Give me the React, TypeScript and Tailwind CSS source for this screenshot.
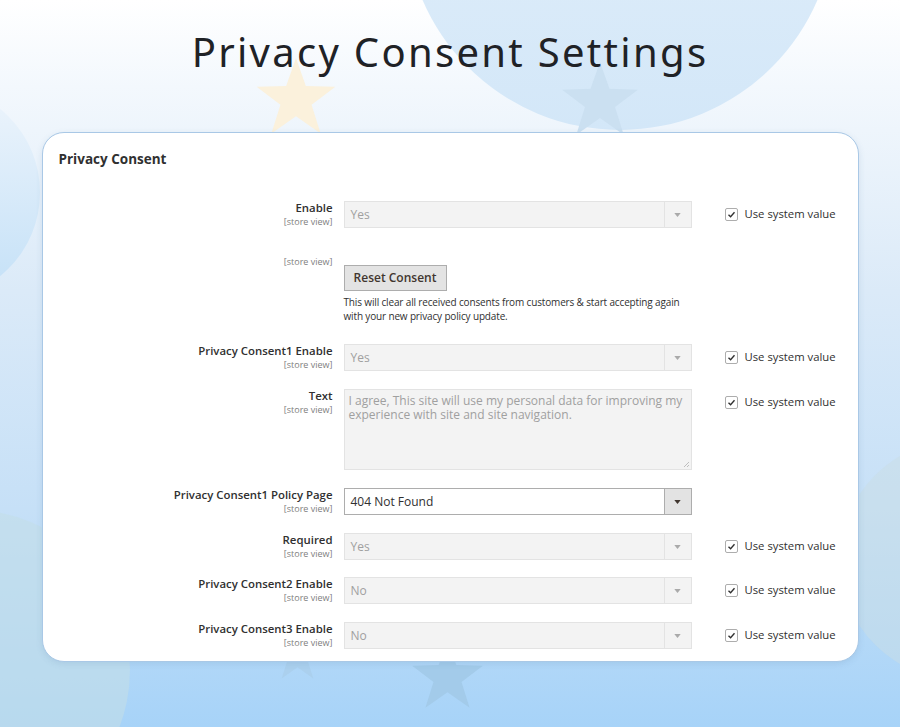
// Privacy consent settings panel over a soft blue backdrop

const font = { fontFamily: '"Open Sans", "Noto Sans", sans-serif' };

function Star({ className, fill }: { className: string; fill: string }) {
  return (
    <svg viewBox="0 0 100 95" className={className}>
      <path d="M50 0 L62 34 L98 35 L69 57 L80 92 L50 71 L20 92 L31 57 L2 35 L38 34 Z" fill={fill} />
    </svg>
  );
}

function Label({ title, scope = '[store view]' }: { title?: string; scope?: string }) {
  return (
    <div className="w-[290px] shrink-0 text-right leading-none">
      {title && <div className="text-[11.4px] font-semibold text-[#303030] leading-[14px]">{title}</div>}
      <div className={title ? 'text-[9px] text-[#808080] leading-[13px]' : 'text-[9px] text-[#808080] leading-[11px]'}>{scope}</div>
    </div>
  );
}

function SystemValue() {
  return (
    <div className="ml-[33px] flex h-[27px] items-center gap-[7px]">
      <span className="flex h-[13px] w-[13px] items-center justify-center rounded-[2px] border border-[#adadad] bg-white">
        <svg viewBox="0 0 12 12" className="h-[9px] w-[9px]">
          <path d="M2 6.2 L4.8 9 L10 3" fill="none" stroke="#303030" strokeWidth="1.8" />
        </svg>
      </span>
      <span className="text-[11.3px] text-[#303030]">Use system value</span>
    </div>
  );
}

function Select({ value, enabled = false }: { value: string; enabled?: boolean }) {
  return (
    <div
      className={
        enabled
          ? 'flex h-[27px] w-[348px] border border-[#adadad] bg-white'
          : 'flex h-[27px] w-[348px] border border-[#e3e3e3] bg-[#f3f3f3]'
      }
    >
      <div className={enabled ? 'flex-1 pl-[6px] text-[12px] leading-[25px] text-[#303030]' : 'flex-1 pl-[6px] text-[12px] leading-[25px] text-[#a0a0a0]'}>
        {value}
      </div>
      <div
        className={
          enabled
            ? 'flex w-[27px] items-center justify-center border-l border-[#adadad] bg-[#e3e3e3]'
            : 'flex w-[27px] items-center justify-center border-l border-[#e3e3e3]'
        }
      >
        <svg viewBox="0 0 8 5" className="h-[4px] w-[7px]">
          <path d="M0 0 L8 0 L4 5 Z" fill={enabled ? '#41362f' : '#aaaaaa'} />
        </svg>
      </div>
    </div>
  );
}

function SelectRow({ title, value, system = true, enabled = false, className = '' }: { title: string; value: string; system?: boolean; enabled?: boolean; className?: string }) {
  return (
    <div className={`flex items-start ${className}`}>
      <Label title={title} />
      <div className="ml-[11px]">
        <Select value={value} enabled={enabled} />
      </div>
      {system && <SystemValue />}
    </div>
  );
}

export default function App() {
  return (
    <div
      className="relative h-[727px] w-[900px] overflow-hidden bg-[linear-gradient(180deg,#ffffff_0%,#f3f8fd_12%,#dbeaf8_40%,#c6e0f7_70%,#a7d3f8_100%)]"
      style={font}
    >
      {/* backdrop shapes */}
      <div className="absolute left-[405px] top-[-300px] h-[430px] w-[430px] rounded-full bg-[linear-gradient(180deg,#e8f2fb_0%,#d3e7f8_100%)]" />
      <div className="absolute left-[-260px] top-[85px] h-[215px] w-[300px] rounded-full bg-[linear-gradient(180deg,#eef5fc_0%,#c3e0f7_100%)]" />
      <div className="absolute left-[-190px] top-[510px] h-[320px] w-[320px] rounded-full bg-[#c3dee8] opacity-60" />
      <div className="absolute left-[840px] top-[440px] h-[240px] w-[240px] rounded-full bg-[#c9dee6] opacity-50" />
      <Star className="absolute left-[255px] top-[58px] h-[78px] w-[82px]" fill="#fbf1dc" />
      <Star className="absolute left-[560px] top-[62px] h-[75px] w-[80px]" fill="#cbe0f1" />
      <Star className="absolute left-[410px] top-[640px] h-[70px] w-[75px]" fill="#a3cbea" />
      <Star className="absolute left-[270px] top-[630px] h-[50px] w-[55px]" fill="#abd0ee" />

      <div className="relative flex flex-col items-center">
        <h1
          className="mt-[28px] text-[40px] font-normal leading-[48px] tracking-[2.3px] text-[#1f2226]"
          style={{ fontFamily: '"Noto Sans", "DejaVu Sans", sans-serif' }}
        >
          Privacy Consent Settings
        </h1>

        <div className="mt-[56px] h-[530px] w-[817px] rounded-[22px] border border-[#a9c8e6] bg-white pl-[16px] pt-[18px] shadow-[0_2px_6px_rgba(80,120,160,0.15)]">
          <div className="text-[13.5px] font-bold leading-[16px] text-[#303030]">Privacy Consent</div>

          <div className="-ml-[16px] mt-[34px]">
            <SelectRow title="Enable" value="Yes" />

            <div className="mt-[28px] flex items-start">
              <Label />
              <div className="ml-[11px] pt-[8px]">
                <button className="h-[26px] w-[103px] border border-[#adadad] bg-[#e3e3e3] text-[12px] font-semibold text-[#41362f]">
                  Reset Consent
                </button>
                <p className="mt-[4px] w-[360px] text-[10px] leading-[14px] tracking-[-0.15px] text-[#303030]">
                  This will clear all received consents from customers &amp; start accepting again
                  <br />
                  with your new privacy policy update.
                </p>
              </div>
            </div>

            <SelectRow className="mt-[21px]" title="Privacy Consent1 Enable" value="Yes" />

            <div className="mt-[18px] flex items-start">
              <Label title="Text" />
              <div className="relative ml-[11px] h-[81px] w-[348px] border border-[#e3e3e3] bg-[#f3f3f3] px-[4px] pt-[4px] text-[12px] leading-[14px] text-[#a0a0a0]">
                I agree, This site will use my personal data for improving my experience with site and site navigation.
                <svg viewBox="0 0 6 6" className="absolute bottom-[2px] right-[2px] h-[6px] w-[6px]">
                  <path d="M6 1 L1 6 M6 4 L4 6" stroke="#b0b0b0" strokeWidth="0.8" />
                </svg>
              </div>
              <SystemValue />
            </div>

            <SelectRow className="mt-[18px]" title="Privacy Consent1 Policy Page" value="404 Not Found" enabled system={false} />
            <SelectRow className="mt-[18px]" title="Required" value="Yes" />
            <SelectRow className="mt-[17px]" title="Privacy Consent2 Enable" value="No" />
            <SelectRow className="mt-[18px]" title="Privacy Consent3 Enable" value="No" />
          </div>
        </div>
      </div>
    </div>
  );
}
